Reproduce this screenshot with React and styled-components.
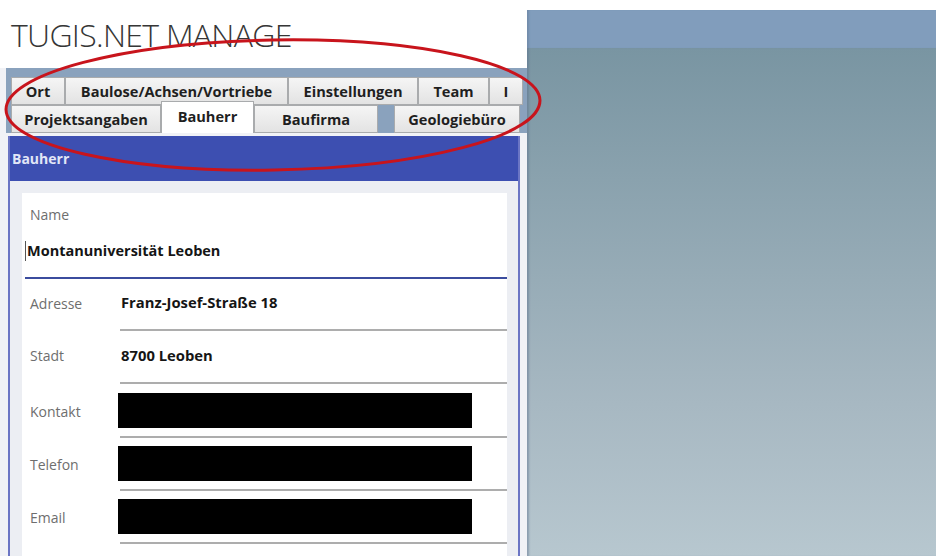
import React from "react";
import styled, { createGlobalStyle } from "styled-components";

const GlobalStyle = createGlobalStyle`
  html, body {
    margin: 0;
    padding: 0;
    background: #ffffff;
  }
  body {
    width: 936px;
    height: 556px;
    overflow: hidden;
    font-family: "Open Sans", "Noto Sans", "Liberation Sans", sans-serif;
  }
  * { box-sizing: border-box; }
`;

const Screen = styled.div`
  position: relative;
  display: flex;
  width: 936px;
  height: 556px;
  overflow: hidden;
`;

const LeftColumn = styled.div`
  width: 527px;
  flex: none;
  display: flex;
  flex-direction: column;
  background: #f1f2f6;
`;

const TitleBar = styled.div`
  height: 68px;
  flex: none;
  background: #ffffff;
  padding: 17px 0 0 11px;
  font-family: "Open Sans", sans-serif;
  font-weight: 300;
  font-size: 32px;
  line-height: 36px;
  color: #363636;
  letter-spacing: -0.7px;
`;

const TabFrame = styled.div`
  flex: none;
  margin-left: 6px;
  background: #8aa2bd;
  padding: 9px 4px 0 5px;
  display: flex;
  flex-direction: column;
`;

const TabRow = styled.div`
  display: flex;
  align-items: flex-end;
  height: ${(p) => p.$height}px;
  margin-top: ${(p) => p.$overlap || 0}px;
`;

const Tab = styled.div`
  flex: ${(p) => (p.$width ? "none" : "1")};
  width: ${(p) => (p.$width ? `${p.$width}px` : "auto")};
  margin-left: ${(p) => p.$gap || 0}px;
  height: ${(p) => (p.$active ? "100%" : `${p.$tabHeight}px`)};
  display: flex;
  align-items: center;
  justify-content: center;
  overflow: hidden;
  white-space: nowrap;
  background: ${(p) =>
    p.$active ? "#ffffff" : "linear-gradient(#f5f5f5, #e3e3e3)"};
  border: 1px solid #a9abad;
  border-bottom: ${(p) => (p.$active ? "none" : "1px solid #a9abad")};
  font-weight: 700;
  font-size: 14.6px;
  color: #1f1f1f;
  padding-bottom: ${(p) => (p.$active ? 4 : 0)}px;
  & + & {
    border-left: ${(p) => (p.$gap ? "1px solid #a9abad" : "none")};
  }
`;

const Body = styled.div`
  flex: 1;
  display: flex;
  padding: 3px 7px 0 8px;
`;

const Panel = styled.div`
  flex: 1;
  display: flex;
  flex-direction: column;
  background: #eceef3;
  border-left: 2px solid #6b75c4;
  border-right: 2px solid #6b75c4;
`;

const PanelHeader = styled.div`
  height: 45px;
  flex: none;
  background: #3d4fb1;
  color: #e2e6f7;
  font-weight: 700;
  font-size: 14px;
  display: flex;
  align-items: center;
  padding-left: 2px;
`;

const Card = styled.div`
  flex: 1;
  margin: 12px 11px 0 12px;
  background: #ffffff;
`;

const NameBlock = styled.div`
  margin-left: 3px;
  padding-top: 13px;
  border-bottom: 2px solid #3b4c9e;
`;

const NameLabel = styled.div`
  padding-left: 5px;
  font-size: 14px;
  line-height: 18px;
  color: #6e6e6e;
`;

const NameValue = styled.div`
  margin-top: 17px;
  margin-bottom: 16px;
  display: flex;
  align-items: center;
  font-weight: 700;
  font-size: 14.5px;
  line-height: 20px;
  color: #151515;
`;

const Caret = styled.span`
  width: 1px;
  height: 20px;
  margin-right: 1px;
  background: #555;
`;

const FieldRow = styled.div`
  display: grid;
  grid-template-columns: 98px 1fr;
  height: ${(p) => p.$height}px;
`;

const FieldLabel = styled.div`
  display: flex;
  align-items: center;
  padding-left: 8px;
  padding-bottom: ${(p) => p.$lift}px;
  font-size: 14px;
  color: #6e6e6e;
`;

const FieldValue = styled.div`
  display: flex;
  align-items: center;
  padding-left: 1px;
  padding-bottom: ${(p) => p.$lift}px;
  border-bottom: 2px solid #adadad;
  font-weight: 700;
  font-size: 14.8px;
  color: #151515;
`;

const Redacted = styled.div`
  width: 354px;
  height: 35px;
  margin-left: -3px;
  background: #000000;
`;

const Backdrop = styled.div`
  flex: 1;
  display: flex;
  flex-direction: column;
  padding-top: 10px;
  background: #ffffff;
`;

const BackdropBand = styled.div`
  height: 38px;
  background: #819dbc;
  box-shadow: inset 3px 0 2px -1px rgba(90, 110, 140, 0.35);
`;

const BackdropFill = styled.div`
  flex: 1;
  background: linear-gradient(#7995a2, #a7b8c2 70%, #b7c7cf);
  box-shadow: inset 3px 0 2px -1px rgba(90, 110, 140, 0.45);
`;

const Annotation = styled.svg`
  position: absolute;
  left: 0;
  top: 0;
  pointer-events: none;
`;

const topTabs = [
  { label: "Ort", width: 54 },
  { label: "Baulose/Achsen/Vortriebe", width: 223 },
  { label: "Einstellungen", width: 130 },
  { label: "Team", width: 71 },
  { label: "I" },
];

const subTabs = [
  { label: "Projektsangaben", width: 150 },
  { label: "Bauherr", width: 93, active: true },
  { label: "Baufirma", width: 124 },
  { label: "Geologiebüro", width: 126, gap: 16 },
];

const fields = [
  { label: "Adresse", value: "Franz-Josef-Straße 18", height: 52, lift: 4 },
  { label: "Stadt", value: "8700 Leoben", height: 53, lift: 4 },
  { label: "Kontakt", redacted: true, height: 54, lift: 0 },
  { label: "Telefon", redacted: true, height: 53, lift: 0 },
  { label: "Email", redacted: true, height: 53, lift: 0 },
];

export default function App() {
  return (
    <>
      <GlobalStyle />
      <Screen>
        <LeftColumn>
          <TitleBar>TUGIS.NET MANAGE</TitleBar>
          <TabFrame>
            <TabRow $height={28}>
              {topTabs.map((t) => (
                <Tab key={t.label} $width={t.width} $tabHeight={28}>
                  {t.label}
                </Tab>
              ))}
            </TabRow>
            <TabRow $height={32} $overlap={-4}>
              {subTabs.map((t) => (
                <Tab
                  key={t.label}
                  $width={t.width}
                  $tabHeight={28}
                  $active={t.active}
                  $gap={t.gap}
                >
                  {t.label}
                </Tab>
              ))}
            </TabRow>
          </TabFrame>
          <Body>
            <Panel>
              <PanelHeader>Bauherr</PanelHeader>
              <Card>
                <NameBlock>
                  <NameLabel>Name</NameLabel>
                  <NameValue>
                    <Caret />
                    Montanuniversität Leoben
                  </NameValue>
                </NameBlock>
                {fields.map((f) => (
                  <FieldRow key={f.label} $height={f.height}>
                    <FieldLabel $lift={f.lift}>{f.label}</FieldLabel>
                    <FieldValue $lift={f.lift}>
                      {f.redacted ? <Redacted /> : f.value}
                    </FieldValue>
                  </FieldRow>
                ))}
              </Card>
            </Panel>
          </Body>
        </LeftColumn>
        <Backdrop>
          <BackdropBand />
          <BackdropFill />
        </Backdrop>
        <Annotation width="936" height="556" viewBox="0 0 936 556">
          <ellipse
            cx="273"
            cy="105"
            rx="267"
            ry="65"
            fill="none"
            stroke="#c8141c"
            strokeWidth="3"
            transform="rotate(-1 273 105)"
          />
        </Annotation>
      </Screen>
    </>
  );
}
